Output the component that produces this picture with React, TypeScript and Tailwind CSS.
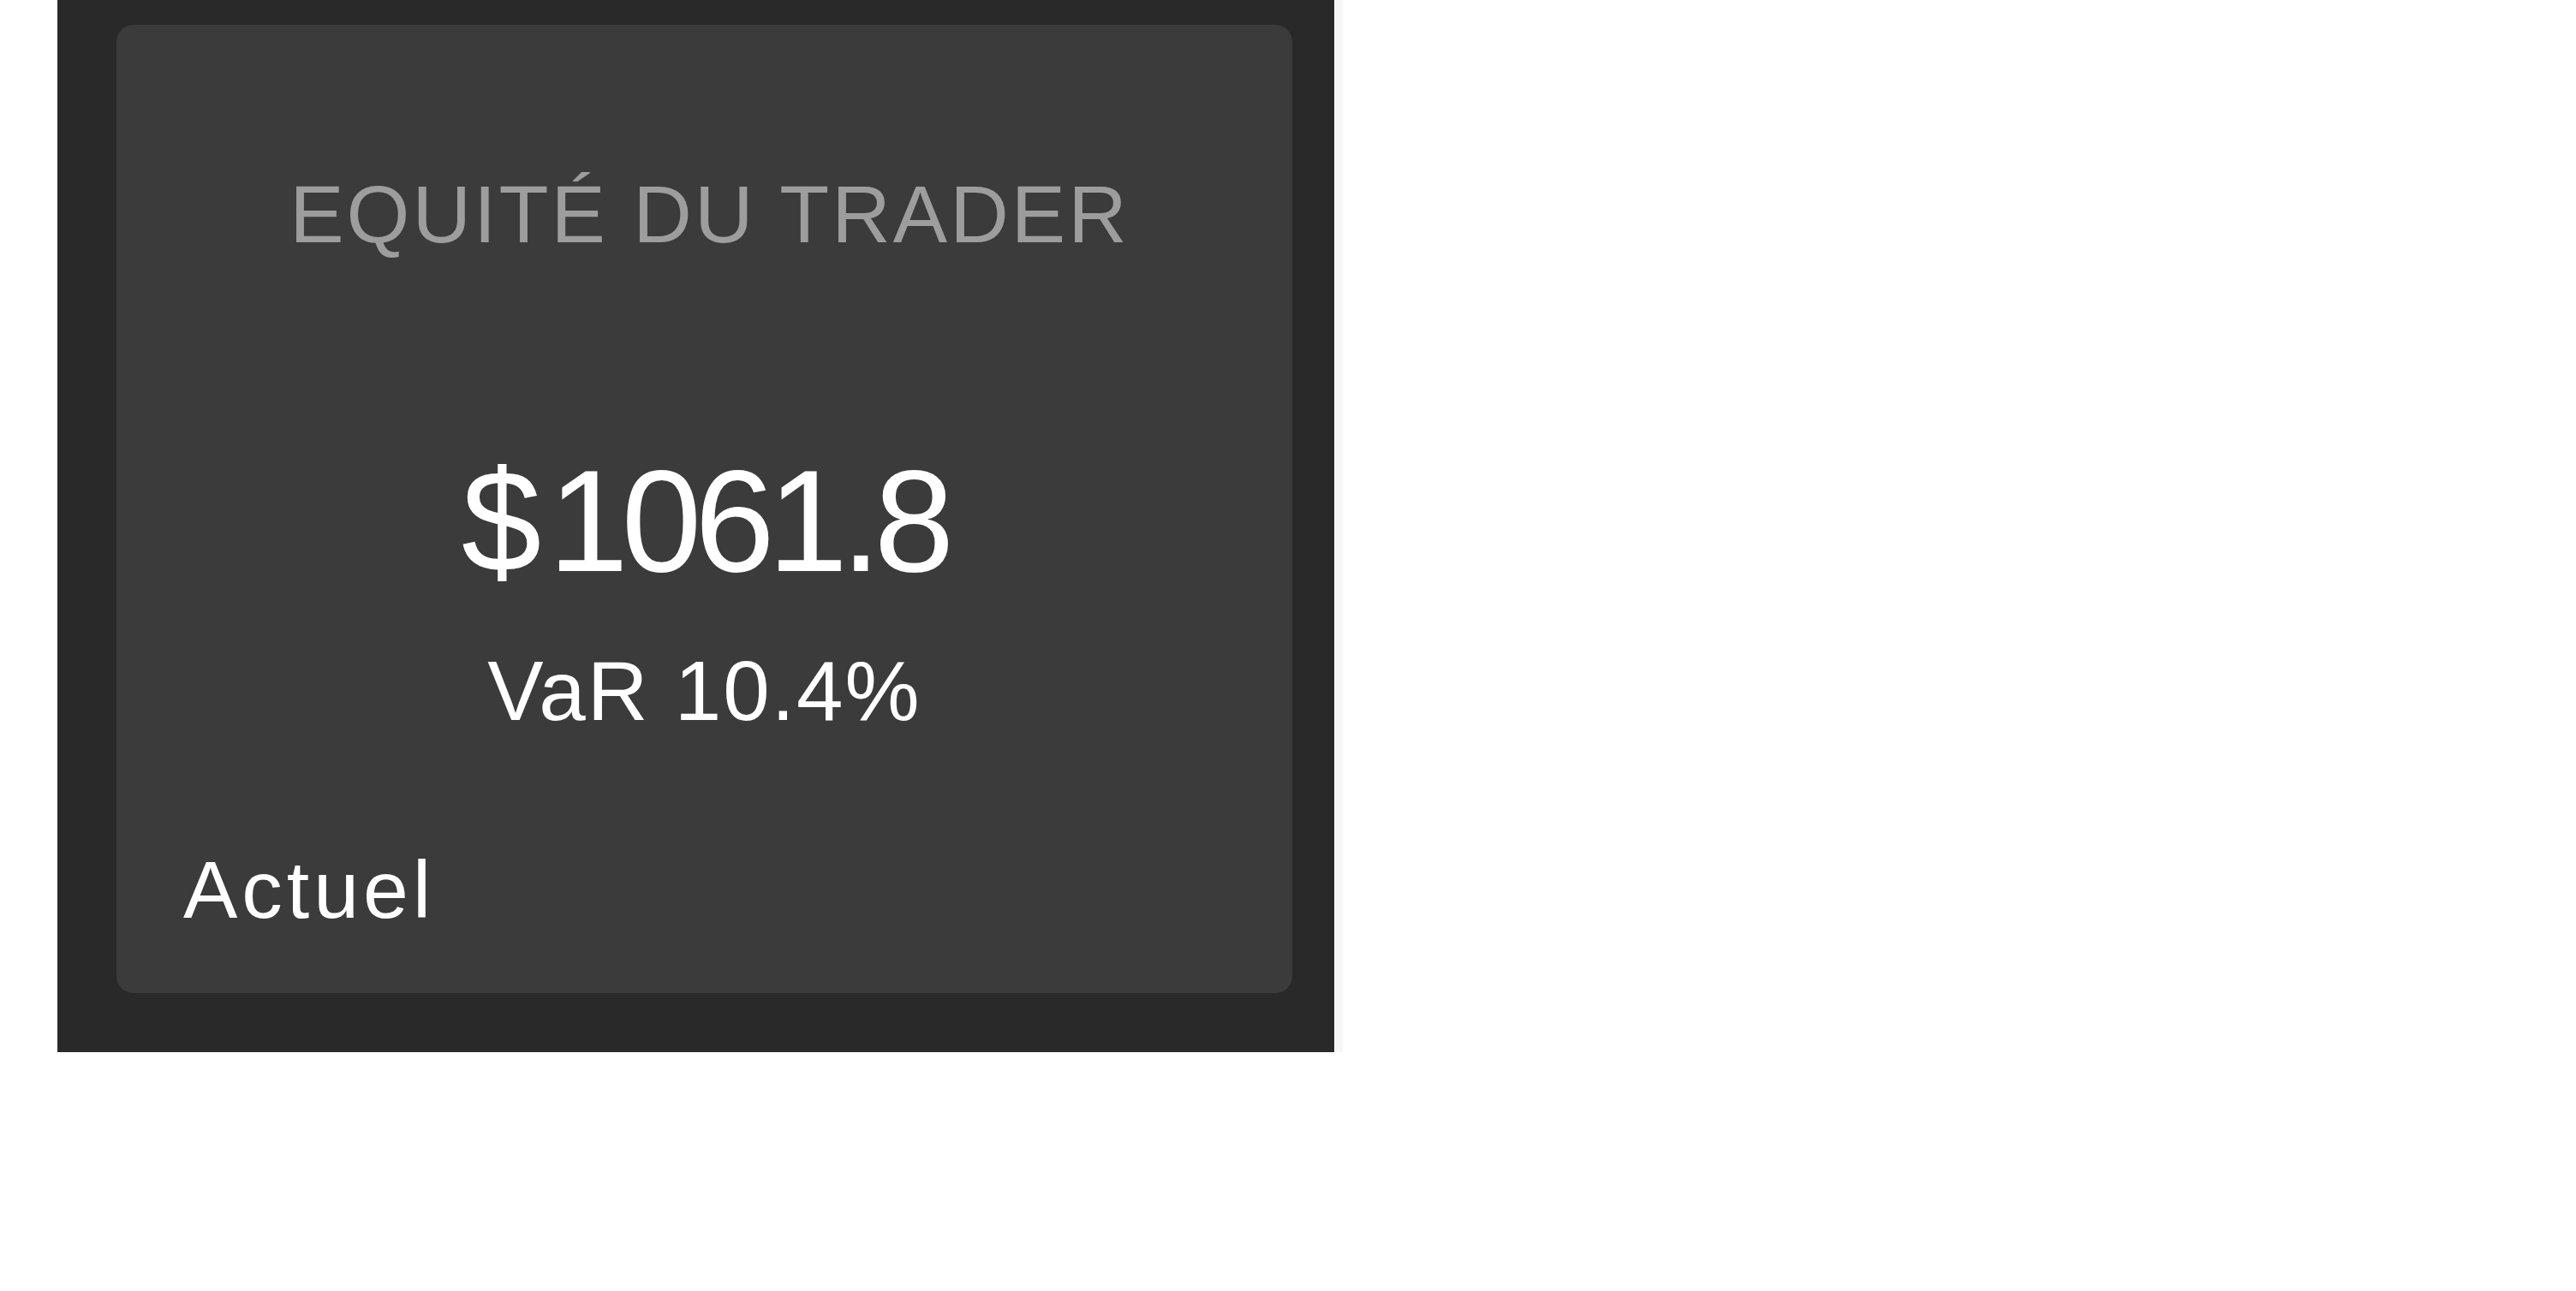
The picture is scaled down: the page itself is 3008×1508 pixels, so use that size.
export default function App() {
  return (
    <div className="min-h-screen bg-white" style={{ fontFamily: '"Liberation Sans", Arial, sans-serif' }}>
      <div className="flex pl-[67px]">
        {/* dark frame */}
        <div className="w-[1491px] h-[1229px] bg-[#292929] pl-[69px] pt-[29px]">
          <div className="w-[1373px] h-[1131px] rounded-[20px] bg-[#3b3b3b] flex flex-col pt-[174px] pl-[78px] pr-[67px]">
            <div className="ml-[1px] text-center text-[95px] leading-none tracking-[3px] text-[#9d9d9d]">
              EQUITÉ DU TRADER
            </div>
            <div className="-ml-[11px] mt-[227px] text-center text-[168px] leading-none tracking-[-8px] text-white">
              <span className="mr-[16px]">$</span>1061.8
            </div>
            <div className="-ml-[11px] mt-[65px] text-center text-[98px] leading-none tracking-[2px] text-white">
              VaR 10.4%
            </div>
            <div className="mt-[136px] text-[95px] leading-none tracking-[5px] text-white">
              Actuel
            </div>
          </div>
        </div>
        {/* thin light strip at the right edge */}
        <div className="w-[10px] h-[1229px] bg-[#f7f7f7]" />
      </div>
    </div>
  );
}
